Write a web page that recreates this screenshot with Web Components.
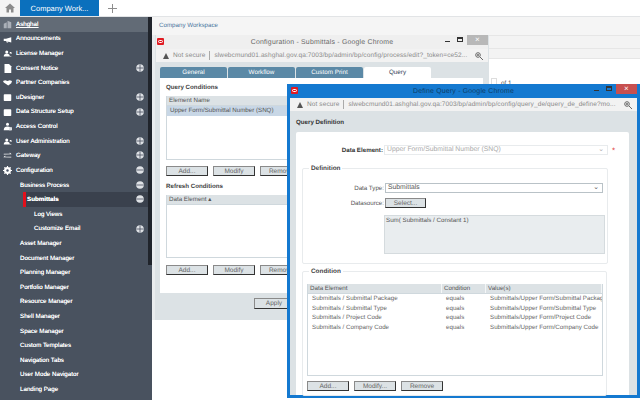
<!DOCTYPE html>
<html>
<head>
<meta charset="utf-8">
<title>Company Workspace</title>
<style>
  html, body {margin: 0; height: 100%; overflow: hidden; background: #fff;}
  body {font: 6.200px "Liberation Sans", Arial, sans-serif; color: #333; text-rendering: geometricPrecision;}
</style>
</head>
<body>
<app-shell>
  <top-bar slot="top" tab="Company Work..."></top-bar>
  <side-nav slot="side">
    <nav-item label="Ashghal" icon="building" current></nav-item>
    <nav-item label="Announcements" icon="horn"></nav-item>
    <nav-item label="License Manager" icon="users"></nav-item>
    <nav-item label="Consent Notice" icon="page" toggle="plus"></nav-item>
    <nav-item label="Partner Companies" icon="hands"></nav-item>
    <nav-item label="uDesigner" icon="box" toggle="plus"></nav-item>
    <nav-item label="Data Structure Setup" icon="box" toggle="plus"></nav-item>
    <nav-item label="Access Control" icon="lock"></nav-item>
    <nav-item label="User Administration" icon="users" toggle="plus"></nav-item>
    <nav-item label="Gateway" icon="arrows" toggle="plus"></nav-item>
    <nav-item label="Configuration" icon="gear" toggle="minus"></nav-item>
    <nav-item label="Business Process" level="1" toggle="minus"></nav-item>
    <nav-item label="Submittals" level="2" toggle="minus" selected></nav-item>
    <nav-item label="Log Views" level="3"></nav-item>
    <nav-item label="Customize Email" level="3" toggle="plus"></nav-item>
    <nav-item label="Asset Manager" level="1"></nav-item>
    <nav-item label="Document Manager" level="1"></nav-item>
    <nav-item label="Planning Manager" level="1"></nav-item>
    <nav-item label="Portfolio Manager" level="1"></nav-item>
    <nav-item label="Resource Manager" level="1"></nav-item>
    <nav-item label="Shell Manager" level="1"></nav-item>
    <nav-item label="Space Manager" level="1"></nav-item>
    <nav-item label="Custom Templates" level="1"></nav-item>
    <nav-item label="Navigation Tabs" level="1"></nav-item>
    <nav-item label="User Mode Navigator" level="1"></nav-item>
    <nav-item label="Landing Page" level="1"></nav-item>
  </side-nav>
  <work-area slot="main" crumb="Company Workspace">
    <popup-window class="config" heading="Configuration - Submittals - Google Chrome"
      url="slwebcmund01.ashghal.gov.qa:7003/bp/admin/bp/config/process/edit?_token=ce52...">
      <config-form></config-form>
    </popup-window>
    <popup-window class="define" active heading="Define Query - Google Chrome"
      url="slwebcmund01.ashghal.gov.qa:7003/bp/admin/bp/config/query_de/query_de_define?mo...">
      <define-form></define-form>
    </popup-window>
  </work-area>
</app-shell>

<script>
// 侧栏图标
const ICONS = {
  building: '<path d="M1 11V5l4-2v8zM6 11V1l5 2v8z" fill="#aab0b8"/>',
  horn: '<path d="M1 5h3l7-2v7L4 8H1zM4 8l1 2h2L6 8z" fill="#fff"/>',
  users: '<circle cx="5" cy="4" r="2" fill="#fff"/><path d="M1 10c0-3 2-4 4-4s4 1 4 4z" fill="#fff"/><path d="M9 4h2v1h1v1H9v3l3 1H9z" fill="#fff"/>',
  page: '<path d="M2 0h6l3 3v9H2z" fill="#fff"/>',
  hands: '<path d="M0 4l3-1 3 1 3-1 3 1-1 3-4 3-3-2-3-2z" fill="#fff"/>',
  box: '<rect x="1" y="1.500" width="10" height="9" rx="1" fill="#fff"/>',
  lock: '<circle cx="6" cy="3" r="2" fill="#fff"/><path d="M1 11c0-4 2-5 5-5s5 1 5 5z" fill="#fff"/><rect x="8" y="7" width="4" height="4" fill="#dfe2e6"/>',
  arrows: '<path d="M1 3.500h8V2l2.500 2.200L1 4.600zM11 7.500H3V6L.5 8.200 11 8.600z" fill="#fff"/>',
  gear: '<circle cx="6" cy="6" r="3.400" fill="none" stroke="#fff" stroke-width="2.400"/><path d="M6 0v12M0 6h12M1.800 1.800l8.400 8.400M10.200 1.800l-8.400 8.400" stroke="#fff" stroke-width="1.500"/><circle cx="6" cy="6" r="1.600" fill="#4a5568"/>'
};

class AppShell extends HTMLElement {
  constructor() {
    super();
    this.attachShadow({mode: 'open'}).innerHTML = `
      <style>
        :host {display: grid; grid-template: 17px 383px / 148px 492px; width: 640px; height: 400px;}
        .top {display: block; grid-column: 1 / 3;}
      </style>
      <div class="top"><slot name="top"></slot></div>
      <slot name="side"></slot>
      <slot name="main"></slot>
    `;
  }
}

class TopBar extends HTMLElement {
  constructor() {
    super();
    this.attachShadow({mode: 'open'}).innerHTML = `
      <style>
        :host {display: flex; height: 17px; box-sizing: border-box; background: #fff; border-bottom: 1px solid #e2e4e6;}
        .home {width: 20px; display: flex; align-items: center; justify-content: center; background: #f4f4f4;}
        .tab {width: 79px; background: #0b70bd; color: #fff; font-size: 7.500px; display: flex; align-items: center; justify-content: center;}
        .plus {margin-left: 3px; width: 20px; display: flex; align-items: center; justify-content: center;}
      </style>
      <div class="home"><svg width="10" height="10" viewBox="0 0 10 10"><path d="M0 5L5 .5 10 5H8.500v4.500H6V6.500H4v3H1.500V5z" fill="#8b8b8b"/></svg></div>
      <div class="tab">${this.getAttribute('tab')}</div>
      <div class="plus"><svg width="11" height="11" viewBox="0 0 11 11"><path d="M5.500 1v9M1 5.500h9" stroke="#8d8d8d" stroke-width="1"/></svg></div>
    `;
  }
}

class SideNav extends HTMLElement {
  constructor() {
    super();
    this.attachShadow({mode: 'open'}).innerHTML = `
      <style>
        :host {display: block; background: #49525f; color: #fff; height: 383px; overflow: hidden; box-sizing: border-box;}
      </style>
      <slot></slot>
    `;
  }
}

class NavItem extends HTMLElement {
  constructor() {
    super();
    let level = +this.getAttribute('level') || 0;
    let pad = [16, 20, 27, 34][level];
    let icon = ICONS[this.getAttribute('icon')];
    let toggle = this.getAttribute('toggle');
    let bar = toggle == 'plus' ? '<path d="M4 .5v7M.5 4h7" stroke="#49525f" stroke-width=".8"/>' : '<path d="M.5 4h7" stroke="#49525f" stroke-width=".8"/>';
    this.attachShadow({mode: 'open'}).innerHTML = `
      <style>
        :host {display: flex; align-items: center; height: 14.620px; position: relative; padding-left: ${pad}px; white-space: nowrap; text-shadow: 0 0 .4px #fff;}
        :host([current]) {background: #626b76;}
        :host([current]) span {text-decoration: underline;}
        :host([selected]) {background: #3a414d; margin-left: 23px; padding-left: 4px; font-weight: bold;}
        :host([selected]) .mark {display: block;}
        .mark {display: none; position: absolute; left: 0; top: 0; width: 3px; height: 100%; background: #e3101c;}
        .icon {position: absolute; left: 3px; top: 3px;}
        .toggle {position: absolute; left: 136px; top: 3px;}
        :host([selected]) .toggle {left: 113px;}
      </style>
      <i class="mark"></i>
      ${icon ? `<svg class="icon" width="9" height="9" viewBox="0 0 12 12">${icon}</svg>` : ''}
      <span>${this.getAttribute('label')}</span>
      ${toggle ? `<svg class="toggle" width="8" height="8" viewBox="0 0 8 8"><circle cx="4" cy="4" r="3.800" fill="#dfe2e6"/>${bar}</svg>` : ''}
    `;
  }
}

class WorkArea extends HTMLElement {
  constructor() {
    super();
    this.attachShadow({mode: 'open'}).innerHTML = `
      <style>
        :host {display: block; position: relative; height: 383px; background: #fff; border-left: 4px solid #20242b; border-image: linear-gradient(#20242b 248px, #49525f 248px) 1; box-sizing: border-box; overflow: hidden;}
        .crumb {height: 18px; background: #f5f5f5; color: #4a76a0; padding-left: 7px; line-height: 17px; box-sizing: border-box;}
        .strip {height: 24px; background: #f3f3f3; border-top: 1px solid #e6e6e6; border-bottom: 1px solid #e6e6e6; box-sizing: border-box; position: relative;}
        .strip::after {content: ""; position: absolute; left: 0; right: 0; top: 12px; border-top: 1px solid #e6e6e6;}
        .pager {position: absolute; left: 339px; top: 61px; display: flex; gap: 4px; align-items: flex-end; color: #555; font-size: 6.400px;}
        .pager i {display: block; width: 4px; height: 7px; border: 1px solid #ddd;}
        .gutter {position: absolute; left: 0; top: 18px; width: 3px; height: 285px; background: #e9ecee;}
      </style>
      <div class="crumb">${this.getAttribute('crumb')}</div>
      <div class="strip"></div>
      <div class="gutter"></div>
      <div class="pager"><i></i><span>of 1</span></div>
      <slot></slot>
    `;
  }
}

class PopupWindow extends HTMLElement {
  constructor() {
    super();
    this.attachShadow({mode: 'open'}).innerHTML = `
      <style>
        :host {display: flex; flex-direction: column; position: absolute; box-sizing: border-box; background: #dce2e5;}
        :host(.config) {left: 3px; top: 18px; width: 334px; height: 285px; padding: 0 1px;}
        :host(.define) {left: 135px; top: 67px; width: 353px; height: 314px; padding: 0 3px 3px; background: #1479d0;}
        .title {height: 14px; display: flex; align-items: center; position: relative; justify-content: center; font-size: 6.900px; color: #666; flex: none; letter-spacing: .2px;}
        :host(.config) .title {background: #efefef;}
        :host(.define) .title {color: #0d3d66;}
        .logo {position: absolute; left: 1px; top: 3px; width: 7px; height: 7px; background: #e01b22; border-radius: 1px; display: flex; align-items: center; justify-content: center;}
        .logo i {display: block; width: 5px; height: 3px; border: 1px solid #fff; border-radius: 2px; box-sizing: border-box;}
        .ctl {position: absolute; right: 0; top: 0; display: flex; align-items: flex-start;}
        .min {width: 5px; height: 7px; border-bottom: 1.500px solid #333; box-sizing: border-box; margin-right: 7px;}
        .max {width: 6px; height: 5px; border: 1px solid #333; border-top-width: 2px; margin: 2px 4px 0 0; box-sizing: border-box;}
        .close {width: 21px; height: 10px; background: #b8b8b8; color: #fff; text-align: center; font-size: 8px; line-height: 10px;}
        :host(.define) .close {background: #c75050;}
        .addr {height: 13px; flex: none; background: #f2f2f2; display: flex; align-items: center; padding: 0 5px 0 7px; font-size: 6.500px; letter-spacing: .1px; color: #8a8a8a; white-space: nowrap; position: relative;}
        .addr b {font-weight: normal; padding-right: 4px; margin-right: 4px; border-right: 1px solid #aaa; line-height: 9px; margin-left: 4px;}
        .addr span {flex: 1; overflow: hidden;}
        .body {flex: 1; background: #dce2e5; min-height: 0; display: flex;}
      </style>
      <div class="title">
        <div class="logo"><i></i></div>
        <span>${this.getAttribute('heading')}</span>
        <div class="ctl"><div class="min"></div><div class="max"></div><div class="close">×</div></div>
      </div>
      <div class="addr">
        <svg width="6" height="6" viewBox="0 0 6 6"><path d="M3 0l3 6H0z" fill="#555"/></svg>
        <b>Not secure</b><span>${this.getAttribute('url')}</span>
        <svg width="8" height="8" viewBox="0 0 8 8"><circle cx="3" cy="3" r="2.300" fill="none" stroke="#666"/><path d="M5 5l3 3M2 3h2M3 2v2" stroke="#666"/></svg>
      </div>
      <div class="body"><slot></slot></div>
    `;
  }
}

class PushBtn extends HTMLElement {
  constructor() {
    super();
    this.attachShadow({mode: 'open'}).innerHTML = `
      <style>
        :host {display: flex; align-items: center; justify-content: center; flex: none; width: 42px; height: 10px; box-sizing: border-box; background: #dce2e5; border: 1px solid #8a8a8a; border-right-color: #333; border-bottom-color: #333; font-size: 6.500px; color: #666;}
      </style>
      <slot></slot>
    `;
  }
}

class GridList extends HTMLElement {
  constructor() {
    super();
    // 每列宽度用 data-cols 传入, 单元格用 | 分隔
    let cols = this.dataset.cols;
    let head = this.dataset.head.split('|').map(t => `<div class="th">${t}</div>`).join('');
    let rows = (this.dataset.rows || '').split(';').filter(Boolean).map((r, i) => {
      let sel = this.dataset.selected == i ? ' sel' : '';
      return `<div class="row${sel}">` + r.split('|').map(t => `<div class="td">${t}</div>`).join('') + '</div>';
    }).join('');
    this.attachShadow({mode: 'open'}).innerHTML = `
      <style>
        :host {display: block; box-sizing: border-box; border: 1px solid #cfd8dd; border-top: 0; background: #fff; color: #666; overflow: hidden;}
        .head {display: grid; grid-template-columns: ${cols}; height: 10px; box-sizing: border-box; background: #dce2e5; border-bottom: 1px solid #cfd8dd; color: #555; line-height: 9px;}
        .th {padding-left: 2px; border-right: 1px solid #f4f6f7; white-space: nowrap; overflow: hidden;}
        .row {display: grid; grid-template-columns: ${cols}; height: var(--row-h, 10px); line-height: var(--row-h, 10px);}
        .row.sel {background: #c8d7e6; color: #555;}
        .td {padding-left: var(--cell-pad, 3px); white-space: nowrap; overflow: hidden;}
      </style>
      <div class="head">${head}</div>
      <div class="rows">${rows}</div>
    `;
  }
}

class ConfigForm extends HTMLElement {
  constructor() {
    super();
    let btns = `<push-btn>Add...</push-btn><push-btn>Modify</push-btn><push-btn>Remove</push-btn>`;
    this.attachShadow({mode: 'open'}).innerHTML = `
      <style>
        :host {display: flex; flex-direction: column; flex: 1; padding: 5px 5px 0 4px; min-width: 0;}
        .tabs {display: flex; gap: 1px; height: 11px; flex: none;}
        .tabs div {width: 67px; background: #5b89a6; color: #fff; font-size: 6.300px; text-align: center; line-height: 11px; border-radius: 2px 2px 0 0;}
        .tabs .on {background: #fff; color: #345;}
        .panel {background: #fff; height: 215px; flex: none; box-sizing: border-box; padding: 6px 5px 0 6px; display: flex; flex-direction: column;}
        h4 {margin: 0; font-size: 6.200px; color: #444; height: 12px; line-height: 8px; flex: none;}
        .l1 {height: 64px; flex: none;}
        .l2 {height: 63px; flex: none;}
        .btns {display: flex; gap: 5px; margin: 6px 0 7px;}
        .l2 + .btns {margin-top: 7px;}
        .foot {display: flex; padding: 5px 0 0 94px;}
        .foot push-btn {width: 40px; height: 11px;}
      </style>
      <div class="tabs"><div>General</div><div>Workflow</div><div>Custom Print</div><div class="on">Query</div></div>
      <div class="panel">
        <h4>Query Conditions</h4>
        <grid-list class="l1" data-cols="1fr" data-head="Element Name" data-rows="Upper Form/Submittal Number (SNQ)" data-selected="0"></grid-list>
        <div class="btns">${btns}</div>
        <h4>Refresh Conditions</h4>
        <grid-list class="l2" data-cols="1fr" data-head="Data Element ▴"></grid-list>
        <div class="btns">${btns}</div>
      </div>
      <div class="foot"><push-btn>Apply</push-btn></div>
    `;
  }
}

class FieldBox extends HTMLElement {
  constructor() {
    super();
    this.attachShadow({mode: 'open'}).innerHTML = `
      <style>
        :host {display: block; position: relative; border: 1px solid #e8ebed; border-radius: 2px; box-sizing: border-box;}
        .legend {position: absolute; left: 6px; top: -5px; background: #fff; padding: 0 2px; font-weight: bold; font-size: 6.400px; color: #444; line-height: 9px;}
      </style>
      <div class="legend">${this.getAttribute('legend')}</div>
      <slot></slot>
    `;
  }
}

class DefineForm extends HTMLElement {
  constructor() {
    super();
    let rows = 'Submittals / Submittal Package|equals|Submittals/Upper Form/Submittal Package;' +
      'Submittals / Submittal Type|equals|Submittals/Upper Form/Submittal Type;' +
      'Submittals / Project Code|equals|Submittals/Upper Form/Project Code;' +
      'Submittals / Company Code|equals|Submittals/Upper Form/Company Code';
    this.attachShadow({mode: 'open'}).innerHTML = `
      <style>
        :host {display: flex; flex-direction: column; flex: 1; padding: 7px 8px 0 6px; min-width: 0;}
        h4 {margin: 0 0 5px; font-size: 6.200px; color: #333; line-height: 9px; height: 9px;}
        .panel {flex: 1; background: #fff; border-radius: 2px 2px 0 0; padding: 13px 21px 0 6px; display: flex; flex-direction: column; min-height: 0;}
        .line {display: flex; align-items: center; gap: 1px; position: relative;}
        .label {width: 81px; text-align: right; color: #555; flex: none; white-space: nowrap;}
        .label.b {font-weight: bold; color: #333;}
        .select {height: 10px; box-sizing: border-box; border: 1px solid #b9c2c7; line-height: 8px; padding-left: 2px; color: #555; display: flex; justify-content: space-between; align-items: center; padding-right: 3px; font-size: 6.800px;}
        .select.off {width: 224px; color: #aaa; border-color: #e8ebed;}
        .select.on {width: 218px;}
        .star {position: absolute; left: 310px; color: #e03030; font-size: 8px;}
        .def {margin-top: 13px; height: 96px; padding: 14px 0 0 0; flex: none;}
        .ds {margin-top: 5px;}
        .ds push-btn {width: 41px;}
        .ta {margin: 7px 0 0 81px; width: 221px; height: 39px; box-sizing: border-box; background: #e9edef; border: 1px solid #d5dbde; color: #555; padding-left: 1px; line-height: 9px;}
        .cond {margin-top: 7px; flex: 1; margin-bottom: -1px; padding: 12px 0 0 4px; min-height: 0; width: 305px; box-sizing: border-box;}
        grid-list {width: 296px; height: 92px; --row-h: 9.500px; --cell-pad: 4px;}
        .btns {display: flex; gap: 5px; margin-top: 5px;}
      </style>
      <h4>Query Definition</h4>
      <div class="panel">
        <div class="line"><div class="label b">Data Element:</div><div class="select off">Upper Form/Submittal Number (SNQ)<span>⌄</span></div><div class="star">*</div></div>
        <field-box class="def" legend="Definition">
          <div class="line"><div class="label">Data Type:</div><div class="select on">Submittals<span>⌄</span></div></div>
          <div class="line ds"><div class="label">Datasource:</div><push-btn>Select...</push-btn></div>
          <div class="ta">Sum( Submittals / Constant 1)</div>
        </field-box>
        <field-box class="cond" legend="Condition">
          <grid-list data-cols="134px 44px 1fr" data-head="Data Element|Condition|Value(s)" data-rows="${rows}"></grid-list>
          <div class="btns"><push-btn>Add...</push-btn><push-btn>Modify...</push-btn><push-btn>Remove</push-btn></div>
        </field-box>
      </div>
    `;
  }
}

customElements.define('app-shell', AppShell);
customElements.define('top-bar', TopBar);
customElements.define('side-nav', SideNav);
customElements.define('nav-item', NavItem);
customElements.define('work-area', WorkArea);
customElements.define('popup-window', PopupWindow);
customElements.define('push-btn', PushBtn);
customElements.define('grid-list', GridList);
customElements.define('config-form', ConfigForm);
customElements.define('field-box', FieldBox);
customElements.define('define-form', DefineForm);
</script>
</body>
</html>
